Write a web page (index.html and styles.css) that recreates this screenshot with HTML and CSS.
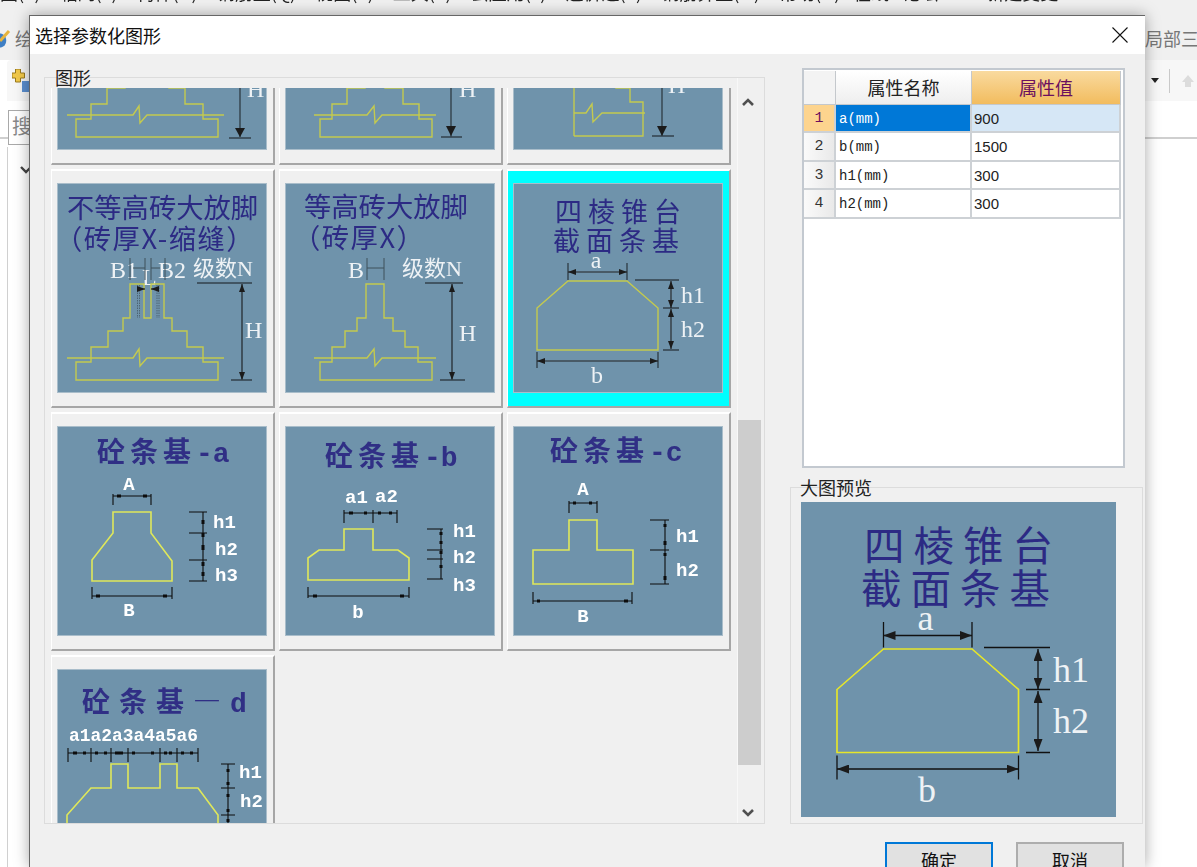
FILE: index.html
```html
<!DOCTYPE html>
<html lang="zh">
<head>
<meta charset="utf-8">
<title>选择参数化图形</title>
<link rel="stylesheet" href="styles.css">
</head>
<body>
<svg class="defs" width="0" height="0" aria-hidden="true">
  <defs>
    <marker id="arr" viewBox="0 0 8 6" refX="8" refY="3" markerWidth="8" markerHeight="6" markerUnits="userSpaceOnUse" orient="auto-start-reverse"><path d="M0 0L8 3L0 6z" fill="#1b1b1b"/></marker>
  </defs>
</svg>

<div class="app">
  <div class="menu">
    <div class="menu-items">
      <span>视图(V)</span><span>轴网(L)</span><span>构件(N)</span><span>钢筋量(Q)</span><span>视图(V)</span><span>工具(T)</span><span>云应用(Y)</span><span>造价通(E)</span><span>钢筋算量(M)</span><span>帮助(H)</span><span class="tight">在线</span><span class="tight">论坛</span>
      <svg class="menu-ico" width="20" height="14" viewBox="0 0 20 14"><rect x="1" y="-8" width="15" height="12" fill="#fff" stroke="#3d86c6" stroke-width="1.4"/><circle cx="15" cy="1" r="4.500" fill="#3fa535"/></svg>
      <span class="m-last">新建变更</span>
    </div>
  </div>
  <div class="tabbar">
    <div class="tab-left">
      <svg width="14" height="20" viewBox="0 0 14 20"><path d="M-2 6a6 7 0 1 1 0 13z" fill="#3f7fc4"/><path d="M0 13L9 3" stroke="#e7b43c" stroke-width="3"/></svg>
      <span>绘</span>
    </div>
    <span class="tab-right">局部三</span>
  </div>
  <div class="toolbar">
    <svg class="tool-plus" width="20" height="24" viewBox="0 0 20 24"><path d="M3.500 0h5v4h4v5h-4v4h-5V9H0V4h3.500z" fill="#f2c94a" stroke="#9a7a1e"/><rect x="10" y="12" width="8" height="11" fill="#5b8fd0"/></svg>
    <div class="tool-right">
      <i class="caret"></i><i class="sep"></i>
      <svg width="16" height="16" viewBox="0 0 16 16"><path d="M8 2l6 7h-3v5H5V9H2z" fill="#dcdcdc"/></svg>
    </div>
  </div>
  <div class="searchrow"><div class="search">搜</div></div>
  <div class="tree">
    <svg width="14" height="10" viewBox="0 0 14 10"><path d="M2 2l5 5 5-5" fill="none" stroke="#444" stroke-width="2.4"/></svg>
  </div>
</div>

<div class="dialog">
  <div class="titlebar">
    <span class="title">选择参数化图形</span>
    <svg class="close" width="16" height="16" viewBox="0 0 16 16"><path d="M.5.5l15 15M15.500.5l-15 15" stroke="#111" stroke-width="1.1"/></svg>
  </div>
  <div class="dlg-body">

    <section class="group shapes">
      <span class="legend">图形</span>
      <div class="list-wrap">
        <div class="grid">

          <div class="card"><svg class="pic" viewBox="0 0 210 210">
            <path class="ln" d="M19 179V197H161V179H146V164H128V148H112V130H68V148H50V164H34V179z"/>
            <path class="ln" d="M10 175H76L82 166L83 183L90 175H167"/>
            <path class="gd" d="M183 100V197M172 198H194"/><path d="M178 188h10l-5 9z" class="ah"/>
            <text class="lb" x="190" y="157">H</text>
          </svg></div>

          <div class="card"><svg class="pic" viewBox="0 0 210 210">
            <path class="ln" d="M35 179V197H147V179H134V164H118V148H100V130H80V148H62V164H47V179z"/>
            <path class="ln" d="M29 175H82L89 166L90 183L97 175H151"/>
            <path class="gd" d="M166 100V197M156 197H177"/><path d="M161 186h10l-5 10z" class="ah"/>
            <text class="lb" x="174" y="157">H</text>
          </svg></div>

          <div class="card"><svg class="pic" viewBox="0 0 210 210">
            <path class="ln" d="M61 196V100M103 100V148H117V162H130V196H61"/>
            <path class="ln" d="M61 173H73L79 164L80 182L89 173H132"/>
            <path class="gd" d="M149 100V196M139 196H161"/><path d="M144 186h10l-5 10z" class="ah"/>
            <text class="lb" x="155" y="153">H</text>
          </svg></div>

          <div class="card"><svg class="pic" viewBox="0 0 210 210">
            <text class="tt" x="10" y="35">不等高砖大放脚</text>
            <text class="tt spaced" x="-2" y="66">（砖厚X-缩缝）</text>
            <text class="lb" x="53" y="95">B1</text><text class="lb" x="101" y="95">B2</text>
            <text class="lb small" x="136" y="93">级数N</text>
            <text class="lb" x="85" y="102">L</text>
            <path class="gd thin" d="M73 75V97M88 75V97M94 75V97M108 75V97M76 85H88M94 85H103"/>
            <path class="dash" d="M80.500 102V135M82.500 102V135M100 102V135M102 102V135"/>
            <path class="ln" d="M19 179V197H161V179H146V164H130V148H115V135H107V101H94V135H87V101H73V135H66V148H51V164H34V179z"/>
            <path class="ln" d="M10 175H76L82 166L83 183L90 175H167"/>
            <line class="dk" x1="80" y1="106" x2="88" y2="106" marker-end="url(#arr)"/>
            <line class="dk" x1="102" y1="106" x2="94" y2="106" marker-end="url(#arr)"/>
            <path class="gd" d="M140 100H195M174 197H195"/>
            <line class="gdw" x1="185" y1="101" x2="185" y2="197" marker-start="url(#arr)" marker-end="url(#arr)"/>
            <text class="lb" x="188" y="155">H</text>
          </svg></div>

          <div class="card"><svg class="pic" viewBox="0 0 210 210">
            <text class="tt" x="19" y="34">等高砖大放脚</text>
            <text class="tt spaced" x="8" y="65">（砖厚X）</text>
            <text class="lb" x="63" y="95">B</text>
            <text class="lb small" x="117" y="93">级数N</text>
            <path class="gd thin" d="M82 75V97M99 75V97M82 85H99"/>
            <path class="ln" d="M35 179V197H147V179H133V164H120V148H108V135H99V101H81V135H72V148H60V164H47V179z"/>
            <path class="ln" d="M29 175H82L89 166L90 183L97 175H151"/>
            <path class="gd" d="M140 100H178M155 197H180"/>
            <line class="gdw" x1="167" y1="101" x2="167" y2="197" marker-start="url(#arr)" marker-end="url(#arr)"/>
            <text class="lb" x="174" y="158">H</text>
          </svg></div>

          <div class="card selected"><svg class="pic" viewBox="0 0 210 210">
            <text class="tt wide" x="42" y="39">四棱锥台</text>
            <text class="tt wide" x="40" y="68">截面条基</text>
            <text class="lb mid" x="83" y="85">a</text>
            <path class="gd" d="M55 80V97M114 80V97M122 97H166M150 125H166M150 167H166M24 169V185M145 169V185"/>
            <line class="dk" x1="55" y1="89" x2="114" y2="89" marker-start="url(#arr)" marker-end="url(#arr)"/>
            <path class="ln" d="M24 125L55 98H114L145 125V167H24z"/>
            <line class="dk" x1="158" y1="98" x2="158" y2="125" marker-start="url(#arr)" marker-end="url(#arr)"/>
            <line class="dk" x1="158" y1="126" x2="158" y2="166" marker-start="url(#arr)" marker-end="url(#arr)"/>
            <line class="dk" x1="24" y1="178" x2="145" y2="178" marker-start="url(#arr)" marker-end="url(#arr)"/>
            <text class="lb" x="168" y="120">h1</text><text class="lb" x="168" y="154">h2</text>
            <text class="lb mid" x="84" y="200">b</text>
          </svg></div>

          <div class="card"><svg class="pic" viewBox="0 0 210 210">
            <text class="tb" x="40" y="36">砼条基<tspan class="lat">-a</tspan></text>
            <text class="lbb mid" x="72" y="64">A</text>
            <path class="bk" d="M56 68V79M94 68V79M56 70H94M35 161V173M115 161V173M35 170H115M132 86H150M132 107H150M132 134H150M132 155H150M146 86V155"/>
            <path class="bk sq" d="M60 70h4M86 70h4M39 170h4M106 170h4M146 94v4M146 107v4M146 119v5M146 136v4M146 146v4"/>
            <path class="ln br" d="M56 86H94V107L115 135V155H35V134L56 107z"/>
            <text class="lbb" x="156" y="102">h1</text><text class="lbb" x="158" y="129">h2</text><text class="lbb" x="158" y="155">h3</text>
            <text class="lbb mid" x="72" y="190">B</text>
          </svg></div>

          <div class="card"><svg class="pic" viewBox="0 0 210 210">
            <text class="tb" x="40" y="40">砼条基<tspan class="lat">-b</tspan></text>
            <text class="lbb" x="60" y="77">a1</text><text class="lbb" x="90" y="76">a2</text>
            <path class="bk" d="M59 84V97M88 84V97M112 84V97M59 87H112M23 161V172M124 161V172M23 170H124M142 103H158M142 124H158M142 133H158M142 153H158M156 103V153"/>
            <path class="bk sq" d="M64 87h4M79 87h3M93 87h3M104 87h3M28 170h4M115 170h4M156 106v3M156 115v3M156 125v3M156 139v3"/>
            <path class="ln br" d="M59 103H88V124H113L124 132V154H23V132L34 124H59z"/>
            <text class="lbb" x="168" y="111">h1</text><text class="lbb" x="168" y="137">h2</text><text class="lbb" x="168" y="165">h3</text>
            <text class="lbb mid" x="73" y="192">b</text>
          </svg></div>

          <div class="card"><svg class="pic" viewBox="0 0 210 210">
            <text class="tb" x="37" y="35">砼条基<tspan class="lat">-c</tspan></text>
            <text class="lbb mid" x="70" y="69">A</text>
            <path class="bk" d="M56 75V87M84 75V87M56 77H84M20 166V178M119 166V178M20 175H119M137 94H156M137 124H156M137 158H156M152 94V158"/>
            <path class="bk sq" d="M60 77h3M76 77h3M24 175h3M111 175h4M152 98v3M152 115v4M152 127v3M152 150v4"/>
            <path class="ln br" d="M56 94H84V124H120V158H20V124H56z"/>
            <text class="lbb" x="163" y="116">h1</text><text class="lbb" x="163" y="150">h2</text>
            <text class="lbb mid" x="70" y="196">B</text>
          </svg></div>

          <div class="card"><svg class="pic" viewBox="0 0 210 210">
            <text class="tb long" x="25" y="43">砼条基—<tspan class="lat">d</tspan></text>
            <text class="lbb" x="12" y="72" textLength="129" lengthAdjust="spacingAndGlyphs">a1a2a3a4a5a6</text>
            <path class="bk" d="M11 79V93M34 79V93M54 79V93M71 79V93M103 79V93M120 79V93M141 79V93M11 84H141M164 95H178M164 119H178M164 146H178M171 95V175"/>
            <path class="bk sq" d="M16 84h4M26 84h3M38 84h3M47 84h3M58 84h8M75 84h3M94 84h3M107 84h3M112 84h3M124 84h3M133 84h3M171 100v3M171 113v3M171 125v3M171 140v3M171 150v3"/>
            <path class="ln br" d="M10 175V146L34 119H54V95H71V119H103V95H120V119H141L161 146V175"/>
            <text class="lbb" x="182" y="109">h1</text><text class="lbb" x="183" y="138">h2</text>
          </svg></div>

        </div>
      </div>
      <div class="scrollbar">
        <div class="sb-up"><svg width="12" height="9" viewBox="0 0 12 9"><path d="M1 7l5-5 5 5" fill="none" stroke="#505050" stroke-width="2.6"/></svg></div>
        <div class="sb-thumb"></div>
        <div class="sb-down"><svg width="12" height="9" viewBox="0 0 12 9"><path d="M1 2l5 5 5-5" fill="none" stroke="#505050" stroke-width="2.6"/></svg></div>
      </div>
    </section>

    <div class="side">
      <div class="props">
        <div class="pgrid">
          <div class="ph corner"></div><div class="ph">属性名称</div><div class="ph active">属性值</div>
          <div class="idx sel">1</div><div class="cell mono cur">a(mm)</div><div class="cell val hi">900</div>
          <div class="idx">2</div><div class="cell mono">b(mm)</div><div class="cell val">1500</div>
          <div class="idx">3</div><div class="cell mono">h1(mm)</div><div class="cell val">300</div>
          <div class="idx">4</div><div class="cell mono">h2(mm)</div><div class="cell val">300</div>
        </div>
      </div>

      <section class="group preview">
        <span class="legend">大图预览</span>
        <svg class="pic big" viewBox="0 0 210 210">
          <text class="tt wide" x="42" y="39">四棱锥台</text>
          <text class="tt wide" x="40" y="68">截面条基</text>
          <text class="lb mid" x="83" y="85">a</text>
          <path class="gb" d="M55 80V97M114 80V97M122 97H166M150 125H166M150 167H166M24 169V185M145 169V185"/>
          <line class="gb" x1="55" y1="89" x2="114" y2="89" marker-start="url(#arr)" marker-end="url(#arr)"/>
          <path class="ln hard" d="M24 125L55 98H114L145 125V167H24z"/>
          <line class="gb" x1="158" y1="98" x2="158" y2="125" marker-start="url(#arr)" marker-end="url(#arr)"/>
          <line class="gb" x1="158" y1="126" x2="158" y2="166" marker-start="url(#arr)" marker-end="url(#arr)"/>
          <line class="gb" x1="24" y1="178" x2="145" y2="178" marker-start="url(#arr)" marker-end="url(#arr)"/>
          <text class="lb" x="168" y="120">h1</text><text class="lb" x="168" y="154">h2</text>
          <text class="lb mid" x="84" y="200">b</text>
        </svg>
      </section>

      <div class="actions">
        <button class="btn primary">确定</button>
        <button class="btn">取消</button>
      </div>
    </div>

  </div>
</div>
</body>
</html>
```

FILE: styles.css
```css
* { box-sizing: border-box; }
html, body { margin: 0; padding: 0; height: 100%; overflow: hidden; }
body {
  background: #fff;
  font-family: "Noto Sans CJK SC", "Liberation Sans", sans-serif;
  color: #111;
  position: relative;
}
.defs { display: block; height: 0; }

/* background application */
.app { display: flex; flex-direction: column; height: 100%; }
.menu { height: 15px; background: #f0f0f0; overflow: hidden; flex: none; }
.menu-items {
  display: flex; align-items: center; gap: 19px; margin: -20px 0 0 -18px; height: 24px;
  font-size: 18px; line-height: 24px; white-space: nowrap; color: #222; filter: blur(.5px);
}
.menu-items .tight { margin-left: -6px; }
.menu-ico { margin: 10px -8px 0 -2px; flex: none; }
.tabbar {
  height: 45px; background: #f0f0f0; display: flex; justify-content: space-between; align-items: center;
  color: #777; font-size: 18px; flex: none;
}
.tab-left { display: flex; align-items: center; gap: 1px; }
.tab-right { width: 52px; white-space: nowrap; overflow: hidden; }
.toolbar {
  height: 41px; margin-left: 7px; background: #f7f7f7; display: flex; justify-content: space-between; align-items: center;
  border-radius: 4px 0 0 0; flex: none;
}
.tool-plus { margin-left: 5px; }
.tool-right { display: flex; align-items: center; gap: 10px; padding-right: 1px; }
.caret { width: 0; height: 0; border: 4px solid transparent; border-top: 5px solid #222; border-bottom: 0; }
.sep { width: 1px; height: 24px; background: #c9c9c9; }
.searchrow { height: 38px; padding: 9px 0 0 8px; border-bottom: 2px solid #cfcfcf; background: #fff; flex: none; }
.search {
  width: 120px; height: 35px; border: 1px solid #a9a9a9; font-size: 20px; line-height: 30px; color: #888; padding-left: 3px; background: #fff;
}
.tree { flex: 1; margin: 8px 0 0 7px; padding: 9px 0 0 11px; border-left: 1px solid #d0d0d0; }

/* dialog window */
.dialog {
  position: absolute; left: 29px; top: 15px; width: 1116px; height: 852px; overflow: hidden;
  background: #f0f0f0; border: 1px solid #666; border-bottom: 0; border-right: 0;
  box-shadow: 0 0 14px rgba(0, 0, 0, .35);
}
.titlebar {
  height: 38px; background: #fff; display: flex; justify-content: space-between; align-items: center;
  padding: 0 17px 0 5px;
}
.title { font-size: 18px; line-height: 38px; color: #111; }
.dlg-body { display: flex; align-items: flex-start; padding-left: 14px; }

/* groups */
.group { border: 1px solid #dcdcdc; position: relative; }
.legend {
  position: absolute; left: 10px; top: -11px; font-size: 18px; line-height: 20px; color: #222;
}
.shapes { width: 721px; height: 747px; margin-top: 23px; display: flex; }
.list-wrap { width: 693px; height: 735px; margin-top: 10px; overflow: hidden; }
.grid {
  display: grid; grid-template-columns: repeat(3, 224px); grid-auto-rows: 239px; gap: 4px;
  margin: -162px 0 0 6px;
}
.card {
  background: #f0f0f0; background-clip: padding-box;
  border: solid #a6a6a6; border-width: 2px 2px 2px 1px; border-top-color: #fff; border-left-color: #fff;
  padding: 12px 6px 13px 5px;
}
.card.selected { background-color: #00ffff; }
.pic { display: block; width: 210px; height: 210px; background: #6f93ab; outline: 1px solid #a9bdca; outline-offset: -1px; }
.card .pic { filter: blur(.35px); }
.pic.big { width: 315px; height: 315px; outline: 0; margin: 14px 0 0 10px; }

/* svg drawing */
.ln { fill: none; stroke: #c4ca4f; stroke-width: 1.4; }
.ln.br { stroke: #dfe85a; stroke-width: 1.6; }
.ln.hard { stroke: #e6e62a; stroke-width: 1.1; }
.gd { fill: none; stroke: #33424c; stroke-width: 1.4; }
.gd.thin { stroke-width: 1; stroke: #3f505b; }
.gdw { stroke: #3a4a54; stroke-width: 1.8; }
.gb { fill: none; stroke: #111; stroke-width: .85; }
.dk { stroke: #222; stroke-width: 1.1; }
.ah { fill: #1b1b1b; }
.dash { fill: none; stroke: #3f505b; stroke-width: .7; stroke-dasharray: 1.500 1; }
.bk { fill: none; stroke: #0d0d0d; stroke-width: 1.1; }
.bk.sq { stroke-width: 3; }
.tt, .tb { font-family: "Noto Sans CJK SC", sans-serif; font-size: 27.300px; fill: #2c2a84; }
.tt.wide { letter-spacing: 6px; font-size: 27px; }
.tt.spaced { letter-spacing: 1.500px; }
.tb { font-weight: 700; letter-spacing: 5px; fill: #302f85; font-size: 28px; }
.tb.long { letter-spacing: 9px; font-size: 28px; }
.lat { font-family: "Liberation Mono", monospace; letter-spacing: 0; }
.lb { font-family: "Liberation Serif", "Noto Sans CJK SC", serif; font-size: 24px; fill: #eef2f5; }
.lb.small { font-size: 22px; }
.lbb { font-family: "Liberation Mono", monospace; font-weight: 700; font-size: 19px; fill: #fff; }
.mid { text-anchor: middle; }

/* scrollbar */
.scrollbar { width: 27px; height: 745px; display: flex; flex-direction: column; border-left: 1px solid #f8f8f8; }
.sb-up { height: 48px; padding-left: 4px; display: flex; align-items: center; flex: none; }
.sb-thumb { width: 23px; height: 345px; margin-top: 294px; background: #cdcdcd; flex: none; }
.sb-down { flex: 1; padding: 43px 0 0 4px; }
.sb-up svg, .sb-down svg { display: block; }

/* right side */
.side { width: 355px; margin-left: 25px; display: flex; flex-direction: column; }
.props { width: 323px; height: 400px; margin: 14px 0 0 12px; border: 2px solid #c3c9d0; background: #fff; padding-top: 1px; }
.pgrid { display: grid; grid-template-columns: 32px 136px 149px; grid-template-rows: 34px 28px 28.500px 28.500px 28.500px; }
.ph {
  font-size: 18px; line-height: 33px; text-align: center; color: #222;
  background: linear-gradient(#fff, #eee); border-right: 1px solid #c4c8cc; border-bottom: 1px solid #c4c8cc;
}
.ph.corner { background: #f3f3f3; }
.ph.active { background: linear-gradient(#f9da9f, #f2bc5e); color: #6b0f5e; }
.idx, .cell { border-right: 2px solid #cdd1d5; border-bottom: 2px solid #cdd1d5; font-size: 15px; line-height: 28px; white-space: nowrap; }
.idx { background: linear-gradient(90deg, #fafafa, #e9e9e9); text-align: center; font-family: "Liberation Mono", monospace; color: #333; }
.idx.sel { background: #fdd48e; color: #6b0f5e; }
.cell { padding-left: 3px; color: #222; }
.mono { font-family: "Liberation Mono", monospace; font-size: 14px; }
.val { font-family: "Liberation Sans", sans-serif; padding-left: 2px; }
.cur { background: #0078d7; color: #fff; }
.hi { background: #d6e7f6; }
.preview { width: 353px; height: 337px; margin-top: 19px; }
.preview .legend { left: 9px; }
.actions { display: flex; justify-content: flex-end; gap: 23px; margin-top: 18px; padding-right: 21px; }
.btn {
  width: 108px; height: 36px; font: 18px/26px "Noto Sans CJK SC", sans-serif; color: #111; padding: 0;
  background: #e1e1e1; border: 2px solid #adadad;
}
.btn.primary { border-color: #0078d7; }
```
